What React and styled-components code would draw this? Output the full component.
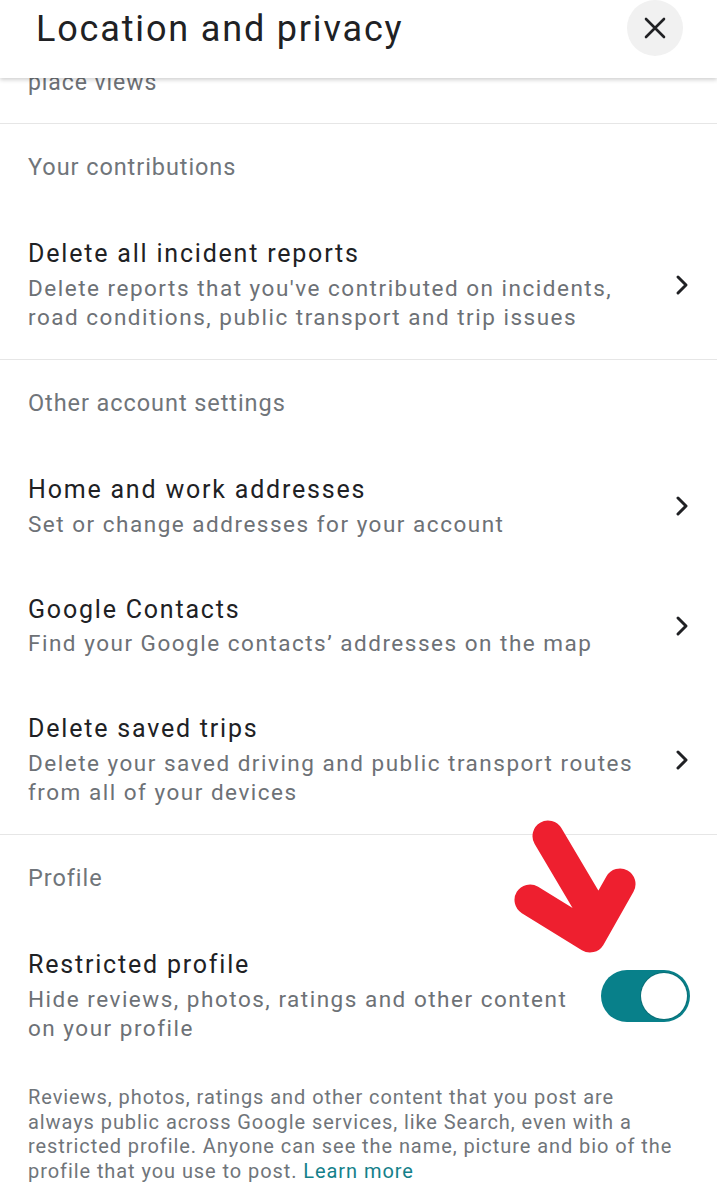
import React from "react";
import styled, { createGlobalStyle } from "styled-components";

const Global = createGlobalStyle`
  html, body { margin: 0; padding: 0; background: #fff; }
  body {
    font-family: Roboto, "Noto Sans", Arial, sans-serif;
    letter-spacing: 0.058em;
    -webkit-font-smoothing: antialiased;
  }
`;

const Page = styled.div`
  position: relative;
  width: 717px;
  height: 1200px;
  overflow: hidden;
  background: #fff;
`;

const Header = styled.header`
  position: absolute;
  top: 0;
  left: 0;
  right: 0;
  height: 78px;
  background: #fff;
  box-shadow: 0 2px 4px rgba(0, 0, 0, 0.18);
  display: flex;
  align-items: center;
  justify-content: space-between;
  padding: 0 34px 0 36px;
  z-index: 2;
`;

const Title = styled.h1`
  margin: 0 0 20px;
  font-size: 36px;
  font-weight: 400;
  color: #202124;
  letter-spacing: 0.051em;
`;

const CloseButton = styled.button`
  width: 56px;
  height: 56px;
  border-radius: 50%;
  border: none;
  background: #f1f1f1;
  display: flex;
  align-items: center;
  justify-content: center;
  margin-bottom: 22px;
  padding: 0;
`;

const Content = styled.main`
  display: flex;
  flex-direction: column;
`;

const Section = styled.section`
  display: flex;
  flex-direction: column;
  border-bottom: ${(p) => (p.$last ? "none" : "1.5px solid #e6e6e6")};
`;

const Lead = styled.div`
  padding: 68px 28px 0;
  height: 55px;
  font-size: 23px;
  line-height: 29px;
  color: #6d7176;
`;

const SectionTitle = styled.div`
  padding: 29px 28px 0;
  height: 57.5px;
  font-size: 23.5px;
  line-height: 28px;
  color: #70757a;
`;

const Row = styled.div`
  display: flex;
  align-items: center;
  justify-content: space-between;
  gap: 16px;
  padding: 27.5px 28px 27.5px;
`;

const RowText = styled.div`
  display: flex;
  flex-direction: column;
`;

const RowTitle = styled.div`
  font-size: 25px;
  line-height: 32px;
  margin-bottom: 3.5px;
  color: #202124;
  letter-spacing: 0.072em;
`;

const RowDesc = styled.div`
  font-size: 22.5px;
  line-height: 29px;
  color: #6d7176;
  letter-spacing: 0.067em;
  white-space: nowrap;
`;

const Chevron = styled.svg`
  width: 14px;
  height: 22px;
  flex-shrink: 0;
`;

const Toggle = styled.div`
  width: 89px;
  height: 52px;
  border-radius: 26px;
  background: #08808a;
  display: flex;
  align-items: center;
  justify-content: flex-end;
  padding-right: 3px;
  box-sizing: border-box;
  flex-shrink: 0;
  margin-right: -1px;
`;

const Thumb = styled.div`
  width: 46px;
  height: 46px;
  border-radius: 50%;
  background: #fff;
  box-shadow: 0 0 0 1px #0a6f77;
`;

const Footnote = styled.p`
  margin: 0;
  padding: 15px 36px 0 28px;
  font-size: 20px;
  line-height: 24.5px;
  color: #70757a;
`;

const Link = styled.a`
  color: #14808a;
  text-decoration: none;
`;

const Arrow = styled.svg`
  position: absolute;
  left: 500px;
  top: 815px;
  width: 150px;
  height: 150px;
  z-index: 1;
  pointer-events: none;
`;

const ChevronIcon = () => (
  <Chevron viewBox="0 0 14 22">
    <path d="M3 3 L11 11 L3 19" fill="none" stroke="#202124" strokeWidth="3" strokeLinecap="round" strokeLinejoin="round" />
  </Chevron>
);

const NavRow = ({ title, desc }) => (
  <Row>
    <RowText>
      <RowTitle>{title}</RowTitle>
      {desc.map((d, i) => (
        <RowDesc key={i}>{d}</RowDesc>
      ))}
    </RowText>
    <ChevronIcon />
  </Row>
);

export default function App() {
  return (
    <Page>
      <Global />
      <Header>
        <Title>Location and privacy</Title>
        <CloseButton aria-label="Close">
          <svg width="22" height="22" viewBox="0 0 22 22">
            <path d="M2 2 L20 20 M20 2 L2 20" stroke="#202124" strokeWidth="2.6" strokeLinecap="round" />
          </svg>
        </CloseButton>
      </Header>
      <Content>
        <Section>
          <Lead>place views</Lead>
        </Section>
        <Section>
          <SectionTitle>Your contributions</SectionTitle>
          <NavRow
            title="Delete all incident reports"
            desc={["Delete reports that you've contributed on incidents,", "road conditions, public transport and trip issues"]}
          />
        </Section>
        <Section>
          <SectionTitle>Other account settings</SectionTitle>
          <NavRow title="Home and work addresses" desc={["Set or change addresses for your account"]} />
          <NavRow title="Google Contacts" desc={["Find your Google contacts’ addresses on the map"]} />
          <NavRow
            title="Delete saved trips"
            desc={["Delete your saved driving and public transport routes", "from all of your devices"]}
          />
        </Section>
        <Section $last>
          <SectionTitle>Profile</SectionTitle>
          <Row>
            <RowText>
              <RowTitle>Restricted profile</RowTitle>
              <RowDesc>Hide reviews, photos, ratings and other content</RowDesc>
              <RowDesc>on your profile</RowDesc>
            </RowText>
            <Toggle role="switch" aria-checked="true">
              <Thumb />
            </Toggle>
          </Row>
          <Footnote>
            Reviews, photos, ratings and other content that you post are always public across Google services, like
            Search, even with a restricted profile. Anyone can see the name, picture and bio of the profile that you use
            to post. <Link href="#">Learn more</Link>
          </Footnote>
        </Section>
      </Content>
      <Arrow viewBox="500 815 150 150">
        <path
          d="M548 836 L593 912 M530 900 L590 937 L620 884"
          fill="none"
          stroke="#ee1f2f"
          strokeWidth="31"
          strokeLinecap="round"
          strokeLinejoin="round"
        />
      </Arrow>
    </Page>
  );
}
